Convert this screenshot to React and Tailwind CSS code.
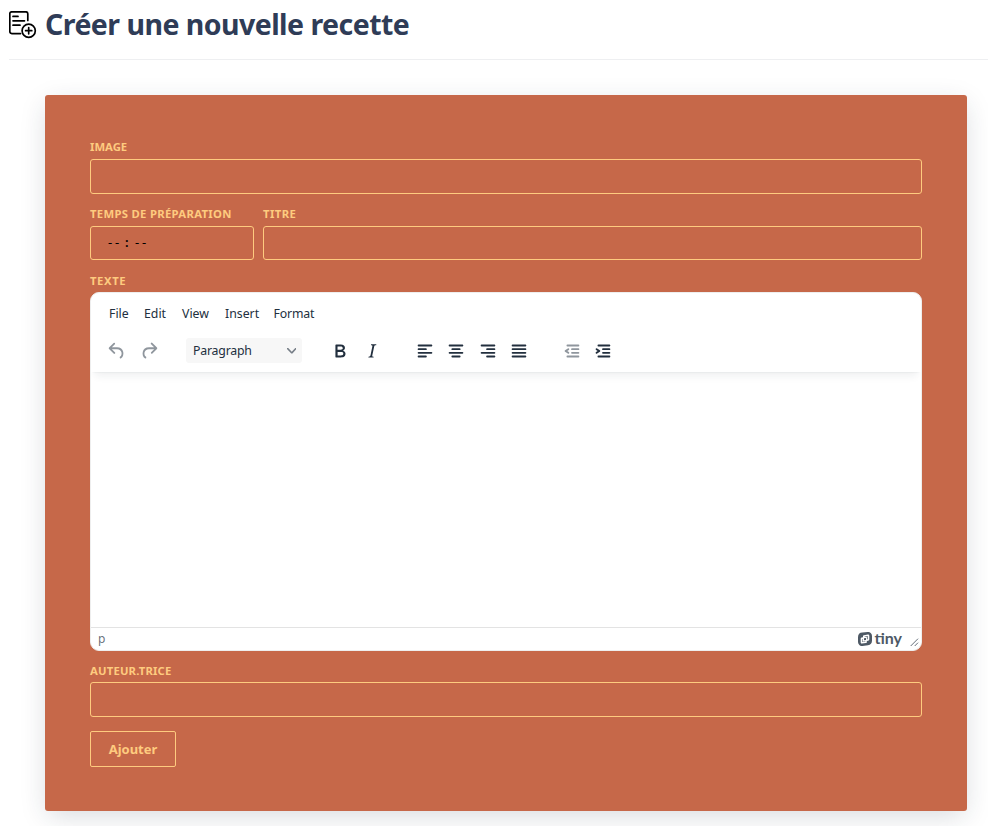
const LABEL = "h-[19px] whitespace-nowrap text-[11.3px] leading-[14px] font-bold text-[#fecb7f]";
const FIELD = "block w-full rounded-[3px] border border-[#fecb7f] bg-transparent";

const ICONS = {
  undo: "M6.4 8H12c3.7 0 6.2 2 6.8 5.1.6 2.7-.4 5.6-2.3 6.8a1 1 0 0 1-1-1.8c1.1-.6 1.8-2.7 1.4-4.6-.5-2.1-2.1-3.5-4.9-3.5H6.4l3.3 3.3a1 1 0 1 1-1.4 1.4l-5-5a1 1 0 0 1 0-1.4l5-5a1 1 0 0 1 1.4 1.4L6.4 8Z",
  redo: "M17.6 10H12c-2.8 0-4.4 1.4-4.9 3.5-.4 2 .3 4 1.4 4.6a1 1 0 1 1-1 1.8c-2-1.2-2.9-4.1-2.3-6.8.6-3 3-5.1 6.8-5.1h5.6l-3.3-3.3a1 1 0 1 1 1.4-1.4l5 5a1 1 0 0 1 0 1.4l-5 5a1 1 0 0 1-1.4-1.4l3.3-3.3Z",
  bold: "M7.8 19c-.3 0-.5 0-.6-.2l-.2-.5V5.7c0-.2 0-.4.2-.5l.6-.2h5c1.5 0 2.7.3 3.5 1 .7.6 1.1 1.4 1.1 2.5a3 3 0 0 1-.6 1.9c-.4.6-1 1-1.6 1.2.4.1.9.3 1.3.6s.8.7 1 1.2c.4.4.5 1 .5 1.6 0 1.3-.4 2.3-1.3 3-.8.7-2.1 1-3.8 1H7.8Zm5-8.3c.6 0 1.2-.1 1.6-.5.4-.3.6-.7.6-1.3 0-1.1-.8-1.7-2.3-1.7H9.3v3.5h3.4Zm.5 6c.7 0 1.3-.1 1.7-.4.4-.4.6-.9.6-1.5s-.2-1-.7-1.4c-.4-.3-1-.4-2-.4H9.4v3.8h4Z",
  italic: "m16.7 4.7-.1.9h-.3c-.6 0-1 0-1.4.3-.3.3-.4.6-.5 1.1l-2.1 9.8v.6c0 .5.4.8 1.4.8h.2l-.2.8H8l.2-.8h.2c1.1 0 1.8-.5 2-1.5l2-9.8.1-.5c0-.6-.4-.8-1.4-.8h-.3l.2-.9h5.8Z",
  left: "M5 5h14c.6 0 1 .4 1 1s-.4 1-1 1H5a1 1 0 1 1 0-2Zm0 4h8c.6 0 1 .4 1 1s-.4 1-1 1H5a1 1 0 1 1 0-2Zm0 8h8c.6 0 1 .4 1 1s-.4 1-1 1H5a1 1 0 0 1 0-2Zm0-4h14c.6 0 1 .4 1 1s-.4 1-1 1H5a1 1 0 0 1 0-2Z",
  center: "M5 5h14c.6 0 1 .4 1 1s-.4 1-1 1H5a1 1 0 1 1 0-2Zm3 4h8c.6 0 1 .4 1 1s-.4 1-1 1H8a1 1 0 1 1 0-2Zm0 8h8c.6 0 1 .4 1 1s-.4 1-1 1H8a1 1 0 0 1 0-2Zm-3-4h14c.6 0 1 .4 1 1s-.4 1-1 1H5a1 1 0 0 1 0-2Z",
  right: "M5 5h14c.6 0 1 .4 1 1s-.4 1-1 1H5a1 1 0 1 1 0-2Zm6 4h8c.6 0 1 .4 1 1s-.4 1-1 1h-8a1 1 0 0 1 0-2Zm0 8h8c.6 0 1 .4 1 1s-.4 1-1 1h-8a1 1 0 0 1 0-2Zm-6-4h14c.6 0 1 .4 1 1s-.4 1-1 1H5a1 1 0 0 1 0-2Z",
  justify: "M5 5h14c.6 0 1 .4 1 1s-.4 1-1 1H5a1 1 0 1 1 0-2Zm0 4h14c.6 0 1 .4 1 1s-.4 1-1 1H5a1 1 0 1 1 0-2Zm0 4h14c.6 0 1 .4 1 1s-.4 1-1 1H5a1 1 0 0 1 0-2Zm0 4h14c.6 0 1 .4 1 1s-.4 1-1 1H5a1 1 0 0 1 0-2Z",
  outdent: "M7 5h12c.6 0 1 .4 1 1s-.4 1-1 1H7a1 1 0 1 1 0-2Zm5 4h7c.6 0 1 .4 1 1s-.4 1-1 1h-7a1 1 0 0 1 0-2Zm0 4h7c.6 0 1 .4 1 1s-.4 1-1 1h-7a1 1 0 0 1 0-2Zm-5 4h12a1 1 0 0 1 0 2H7a1 1 0 0 1 0-2Zm1.6-3.8a1 1 0 0 1-1.2 1.6l-3-2a1 1 0 0 1 0-1.6l3-2a1 1 0 0 1 1.2 1.6L6.8 12l1.8 1.2Z",
  indent: "M7 5h12c.6 0 1 .4 1 1s-.4 1-1 1H7a1 1 0 1 1 0-2Zm5 4h7c.6 0 1 .4 1 1s-.4 1-1 1h-7a1 1 0 0 1 0-2Zm0 4h7c.6 0 1 .4 1 1s-.4 1-1 1h-7a1 1 0 0 1 0-2Zm-5 4h12a1 1 0 0 1 0 2H7a1 1 0 0 1 0-2Zm-2.6-3.8L6.2 12l-1.8-1.2a1 1 0 0 1 1.2-1.6l3 2a1 1 0 0 1 0 1.6l-3 2a1 1 0 1 1-1.2-1.6Z",
};

function Icon({ name, className = "" }) {
  return (
    <svg viewBox="0 0 24 24" className={"mt-px size-[22px] shrink-0 fill-[#222f3e] " + className}>
      <path fillRule="evenodd" d={ICONS[name]} />
    </svg>
  );
}

function Editor() {
  return (
    <div className="flex h-[359px] flex-col overflow-hidden rounded-[9px] border border-[#eee] bg-white text-[#222f3e]">
      <div className="z-10 h-[79px] shrink-0 px-[18px] pt-[2px] shadow-[0_2px_2px_-2px_rgba(34,47,62,.1),0_8px_8px_-4px_rgba(34,47,62,.07)]">
        <div className="flex h-[38px] items-center text-[12.3px]">
          <span className="w-[35px]">File</span>
          <span className="w-[38px]">Edit</span>
          <span className="w-[43px]">View</span>
          <span className="w-[48.5px]">Insert</span>
          <span className="-tracking-[0.15px]">Format</span>
        </div>
        <div className="flex h-[35px] items-center">
          <Icon name="undo" className="-ml-[3px] opacity-50" />
          <Icon name="redo" className="ml-[10px] opacity-50" />
          <div className="ml-[26px] flex h-[25px] w-[116px] items-center justify-between rounded-[3px] bg-[#f7f7f7] pt-px pr-[6px] pl-[7px] text-[12.3px]">
            <span className="-tracking-[0.2px]">Paragraph</span>
            <svg viewBox="0 0 10 10" className="mb-px size-[9.5px] fill-[#222f3e] opacity-60">
              <path d="M8.7 2.2c.3-.3.8-.3 1 0 .4.4.4.9 0 1.2L5.7 7.8c-.3.3-.9.3-1.2 0L.2 3.4a.8.8 0 0 1 0-1.2c.3-.3.8-.3 1.1 0L5 6l3.7-3.8Z" />
            </svg>
          </div>
          <div className="ml-[27px] flex gap-[10px]">
            <Icon name="bold" />
            <Icon name="italic" />
          </div>
          <div className="ml-[31px] flex gap-[9.3px]">
            <Icon name="left" />
            <Icon name="center" />
            <Icon name="right" />
            <Icon name="justify" />
          </div>
          <div className="ml-[31px] flex gap-[9.3px]">
            <Icon name="outdent" className="opacity-50" />
            <Icon name="indent" />
          </div>
        </div>
      </div>
      <div className="flex-1" />
      <div className="flex h-[23px] shrink-0 items-center border-t border-[#e3e3e3] pr-[2px] pl-[7px]">
        <span className="text-[12px] text-[#222f3e]/70">p</span>
        <svg viewBox="0 0 14 14" className="mr-[2.500px] mb-px ml-auto size-[14px] fill-[#4e5965]">
          <path fillRule="evenodd" d="M4.4.6 9.600 0A4 4 0 0 1 14 4v4.800a4.500 4.500 0 0 1-4 4.400l-5.500.8A4 4 0 0 1 0 10V5.200A4.600 4.600 0 0 1 4.400.6ZM5.800 3.200 10 2.600Q11.300 2.500 11.300 3.800V7.600Q11.200 8.600 10.200 8.800L8.800 9V10.200Q8.700 11 7.900 11.100L4 11.600Q2.700 11.600 2.700 10.400V6.600Q2.800 5.700 3.700 5.500L5 5.300V4Q5.100 3.300 5.800 3.200ZM4.700 7 4.200 7.100V10L7.300 9.600V9.100L5.200 9.400Q4.700 9.400 4.700 8.900ZM6.700 4.400V4.900L8.300 4.700Q8.900 4.700 8.900 5.300V7.300L9.700 7.200V4.100Z" />
          <path d="M6 6.300 8 6V8L6 8.300Z" />
        </svg>
        <span className="mb-[2px] font-['Lato'] text-[16px] leading-none font-bold text-[#4e5965]">tiny</span>
        <svg viewBox="0 0 9 9" className="mt-[7px] ml-[8px] size-[9px] stroke-[#222f3e]/70">
          <path d="M.7 8 8 .7M4.7 8 8 4.7" />
        </svg>
      </div>
    </div>
  );
}

export default function App() {
  return (
    <main className="h-[826px] overflow-hidden bg-white font-['Noto_Sans',sans-serif]">
      <header className="ml-[9px] flex h-[60px] border-b border-[#eeeff1]">
        <svg viewBox="0 0 28 28" className="mt-[11px] size-[28px] shrink-0 fill-none stroke-black" strokeWidth="1.7" strokeLinecap="round" strokeLinejoin="round">
          <path d="M11.500 22.600H2.800a2 2 0 0 1-2-2V2.800a2 2 0 0 1 2-2h14a2 2 0 0 1 2 2V9.500M4 5.400h5M4 9.800h11.500M4 14.200h7" />
          <circle cx="19.700" cy="19.700" r="6.600" />
          <path d="M19.700 16.600v6.200M16.600 19.700h6.200" />
        </svg>
        <h1 className="ml-[8px] text-[28.5px] leading-[48px] font-bold -tracking-[0.54px] whitespace-nowrap text-[#2f3c57]">Créer une nouvelle recette</h1>
      </header>
      <form className="mt-[35px] ml-[45px] flex h-[716px] w-[922px] flex-col rounded-[3px] bg-[#c66849] px-[45px] pt-[45px] shadow-[0_7px_26px_-3px_rgba(30,45,62,.18)]">
        <label className={LABEL + " tracking-[0px]"}>IMAGE</label>
        <input className={FIELD + " h-[35px] shrink-0"} />
        <div className="mt-[13px] flex gap-[9px]">
          <div className="w-[164px]">
            <div className={LABEL + " tracking-[0.3px]"}>TEMPS DE PRÉPARATION</div>
            <div className={FIELD + " flex h-[34px] pl-[17px] text-[13px] leading-[31px] text-black"}>
              <span className="w-[17px] tracking-[2.8px]">--</span>
              <span className="w-[10px] font-semibold">:</span>
              <span className="tracking-[2.8px]">--</span>
            </div>
          </div>
          <div className="flex-1">
            <div className={LABEL + " tracking-[0.4px]"}>TITRE</div>
            <input className={FIELD + " h-[34px]"} />
          </div>
        </div>
        <div className={LABEL + " mt-[14px] !h-[18px] tracking-[0.6px]"}>TEXTE</div>
        <Editor />
        <label className={LABEL + " mt-[13px] !h-[18px] tracking-[0.17px]"}>AUTEUR.TRICE</label>
        <input className={FIELD + " h-[35px] shrink-0"} />
        <button type="button" className="mt-[14px] h-[36px] w-[86px] rounded-[2px] border border-[#fecb7f] pt-[2px] text-[13px] font-bold text-[#fecb7f]">Ajouter</button>
      </form>
    </main>
  );
}
